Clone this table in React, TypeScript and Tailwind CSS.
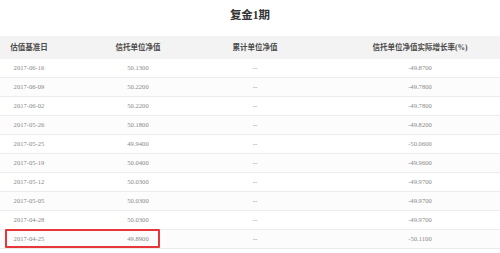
import React from "react";

const rows: [string, string, string, string][] = [
  ["2017-06-16", "50.1300", "--", "-49.8700"],
  ["2017-06-09", "50.2200", "--", "-49.7800"],
  ["2017-06-02", "50.2200", "--", "-49.7800"],
  ["2017-05-26", "50.1800", "--", "-49.8200"],
  ["2017-05-25", "49.9400", "--", "-50.0600"],
  ["2017-05-19", "50.0400", "--", "-49.9600"],
  ["2017-05-12", "50.0300", "--", "-49.9700"],
  ["2017-05-05", "50.0300", "--", "-49.9700"],
  ["2017-04-28", "50.0300", "--", "-49.9700"],
  ["2017-04-25", "49.8900", "--", "-50.1100"],
];

const font = { fontFamily: '"Liberation Serif", "Noto Sans CJK SC", serif' };

export default function App() {
  return (
    <div className="w-[500px] h-[253px] bg-white overflow-hidden" style={font}>
      <div className="h-[36px] flex items-start justify-center pt-[7px]">
        <span className="text-[11.5px] font-bold text-[#333] leading-[16px]">复金1期</span>
      </div>
      <div className="grid grid-cols-[58px_160px_74px_208px] h-[23px] bg-[#f3f3f3] items-center text-[7.5px] font-bold text-[#4a4a4a]">
        <div className="text-center">估值基准日</div>
        <div className="text-center">信托单位净值</div>
        <div className="text-center">累计单位净值</div>
        <div className="text-center pl-[48px]">信托单位净值实际增长率(%)</div>
      </div>
      {rows.map((r, i) => (
        <div
          key={i}
          className={`relative grid grid-cols-[58px_160px_74px_208px] h-[19px] items-center border-b border-[#ececec] text-[6.6px] text-[#8a8a8a] ${
            i % 2 === 1 ? "bg-[#fcfcfc]" : "bg-white"
          }`}
        >
          <div className="text-center">{r[0]}</div>
          <div className="text-center">{r[1]}</div>
          <div className="text-center">{r[2]}</div>
          <div className="text-center pl-[48px]">{r[3]}</div>
          {i === rows.length - 1 && (
            <div className="absolute left-[5px] top-[-1px] w-[155px] h-[19px] border-2 border-[#e8373a] rounded-[1px]" />
          )}
        </div>
      ))}
    </div>
  );
}
